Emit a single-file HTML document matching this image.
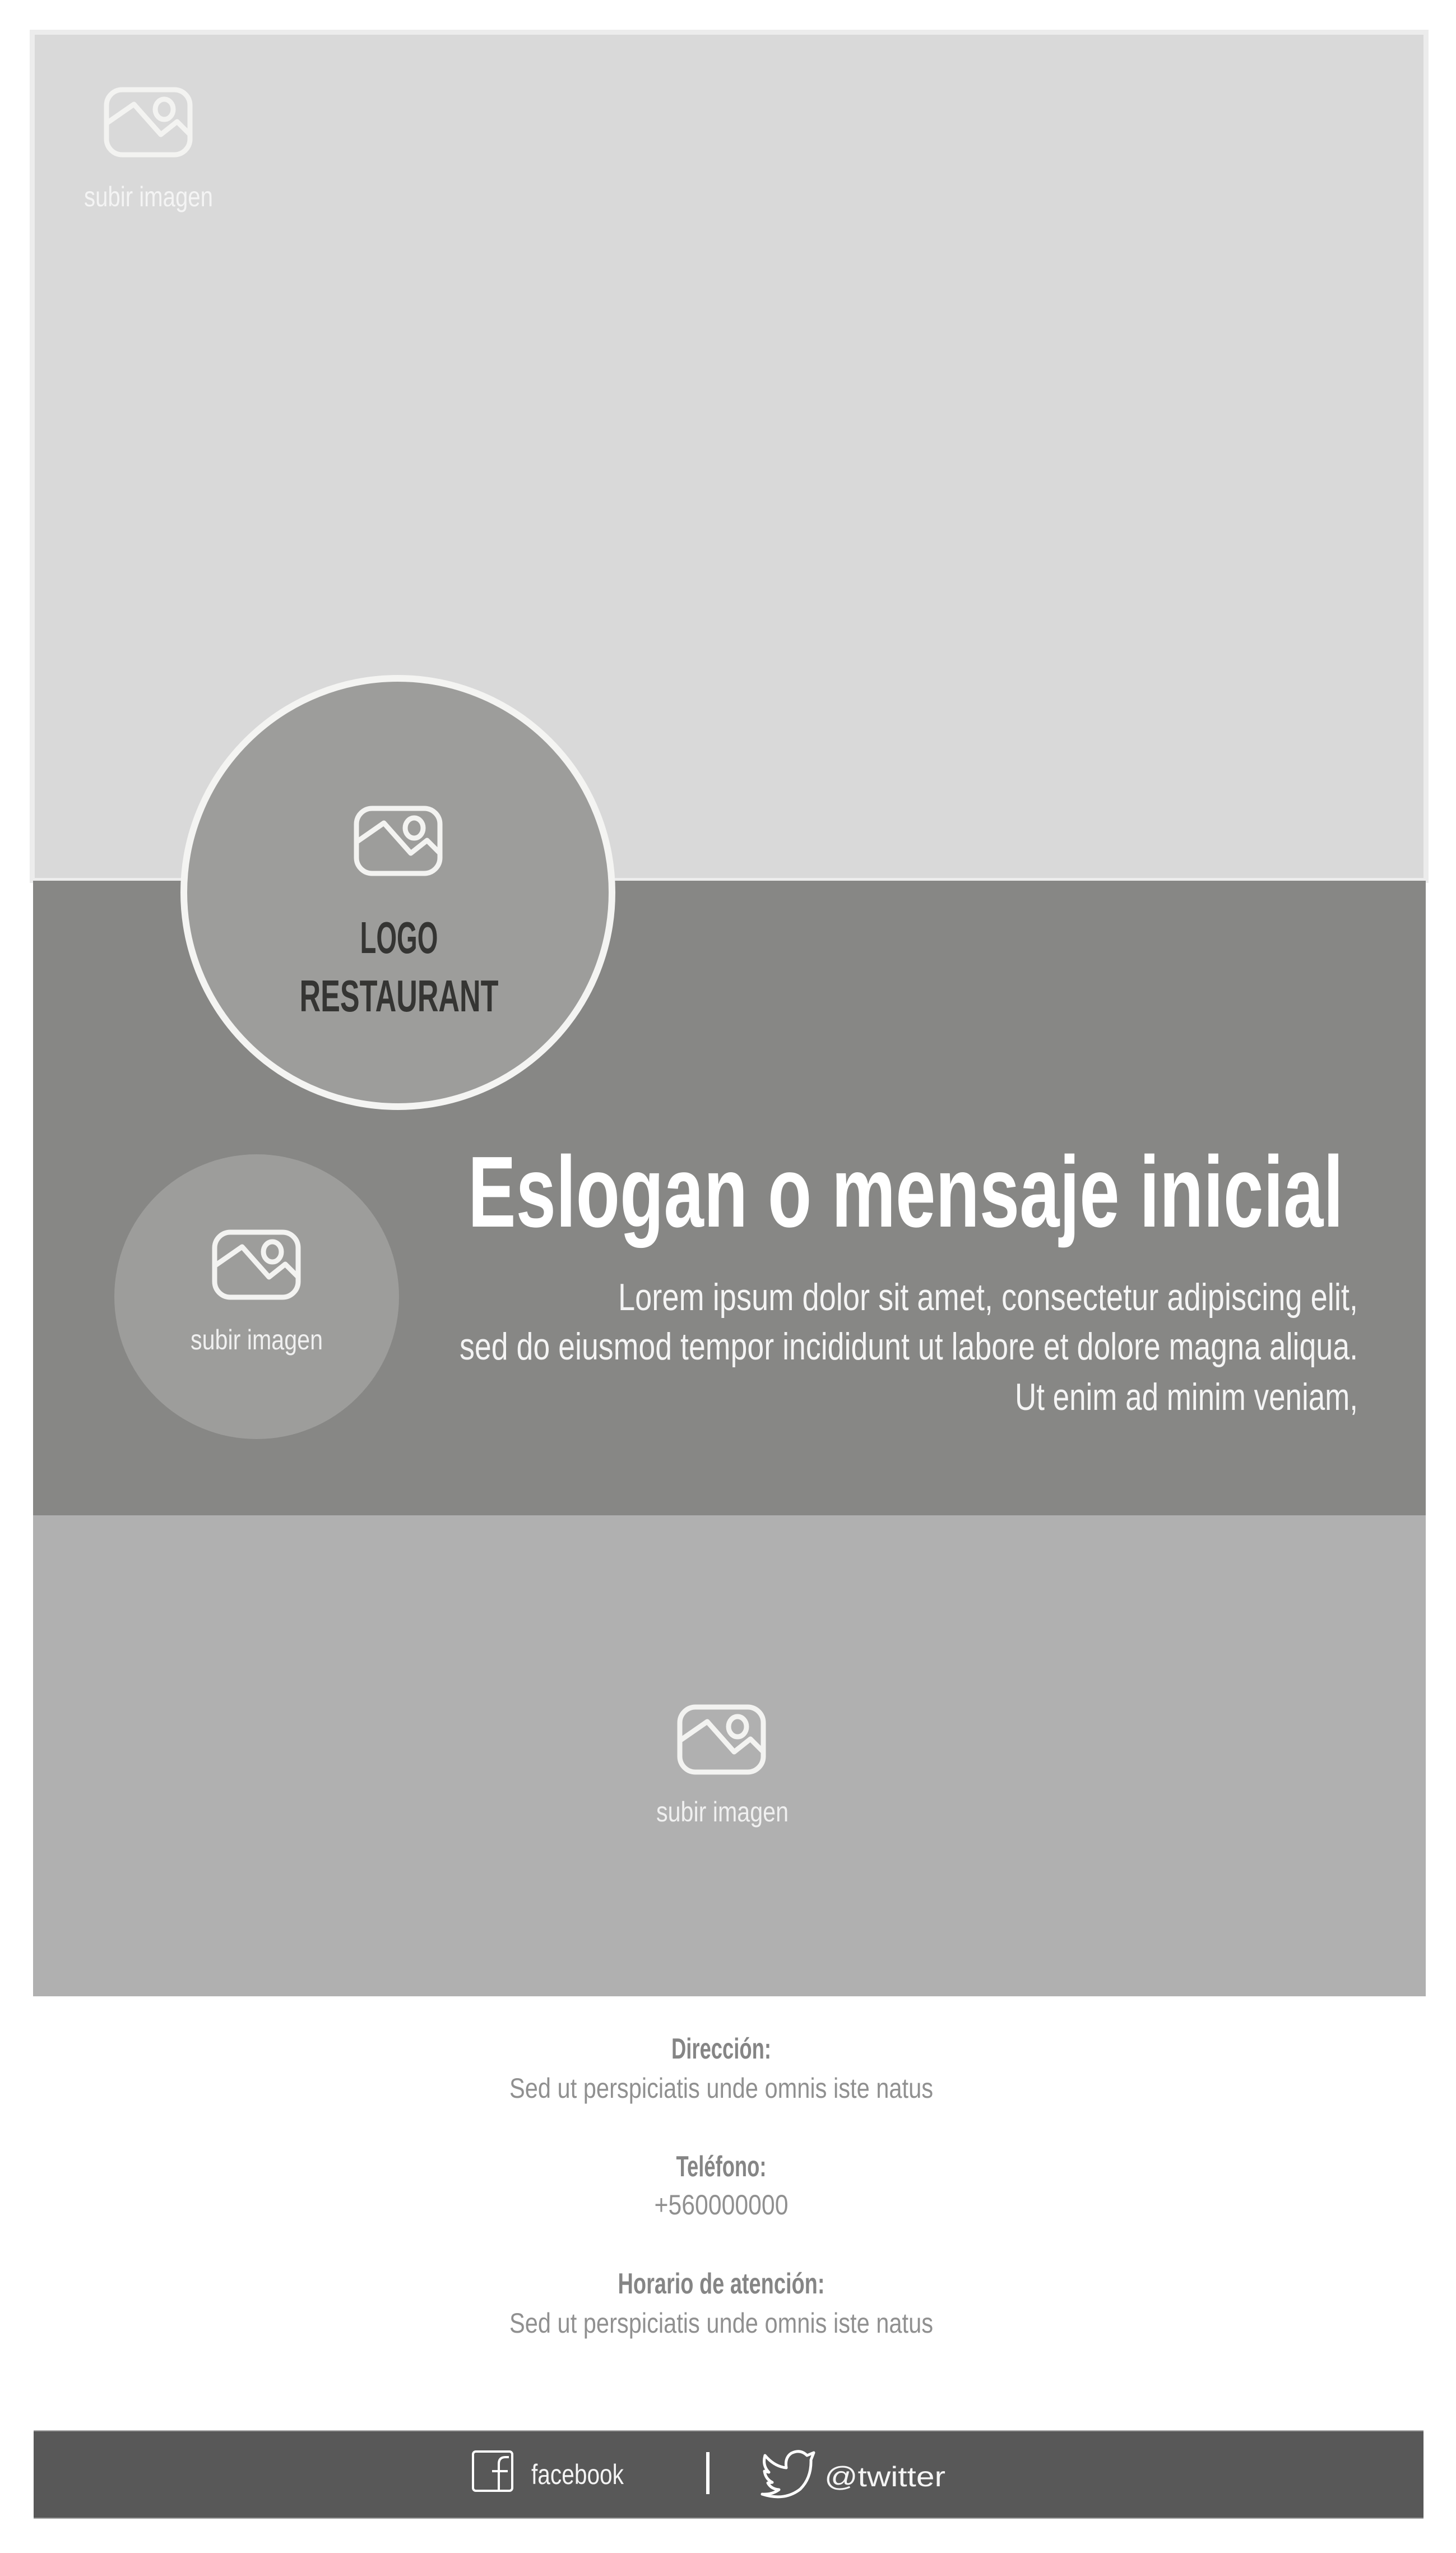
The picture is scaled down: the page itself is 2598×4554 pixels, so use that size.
<!DOCTYPE html>
<html><head><meta charset="utf-8"><style>
html,body{margin:0;padding:0;background:#fff;}
svg{display:block;}
text{font-family:"Liberation Sans",sans-serif;}
</style></head><body>
<svg width="2598" height="4554" viewBox="0 0 2598 4554" xmlns="http://www.w3.org/2000/svg">
<defs>
<g id="ic" fill="none" stroke="#f3f3f1" stroke-width="9" stroke-linejoin="round" stroke-linecap="round">
<rect x="5" y="5" width="149" height="116" rx="28"/>
<polyline points="5,65 54,31 102,85 131,62 154,85"/>
<ellipse cx="108" cy="40" rx="16" ry="18"/>
</g>
</defs>
<rect x="53" y="53" width="2496" height="1522" fill="#ececec"/>
<rect x="62" y="62" width="2478" height="1504" fill="#d9d9d9"/>
<use href="#ic" x="185" y="155"/>
<text x="265" y="368" font-size="50" fill="#f4f4f4" text-anchor="middle" textLength="230" lengthAdjust="spacingAndGlyphs">subir imagen</text>
<rect x="59" y="1571" width="2485" height="1132" fill="#878785"/>
<rect x="59" y="2703" width="2485" height="858" fill="#b0b0b0"/>
<use href="#ic" x="1208" y="3040"/>
<text x="1289" y="3249" font-size="50" fill="#f0f0f0" text-anchor="middle" textLength="236" lengthAdjust="spacingAndGlyphs">subir imagen</text>
<circle cx="710" cy="1592" r="382" fill="#9d9d9b" stroke="#f4f4f2" stroke-width="12"/>
<use href="#ic" x="631" y="1437"/>
<text x="712" y="1700" font-size="80" font-weight="bold" fill="#353533" text-anchor="middle" textLength="139" lengthAdjust="spacingAndGlyphs">LOGO</text>
<text x="712" y="1804" font-size="80" font-weight="bold" fill="#353533" text-anchor="middle" textLength="355" lengthAdjust="spacingAndGlyphs">RESTAURANT</text>
<circle cx="458" cy="2313" r="254" fill="#9d9d9b"/>
<use href="#ic" x="378" y="2193"/>
<text x="458" y="2407" font-size="50" fill="#f0f0f0" text-anchor="middle" textLength="236" lengthAdjust="spacingAndGlyphs">subir imagen</text>
<text x="835" y="2188" font-size="180" font-weight="bold" fill="#ffffff" textLength="1562" lengthAdjust="spacingAndGlyphs">Eslogan o mensaje inicial</text>
<text x="2423" y="2337" font-size="68" fill="#f4f4f4" text-anchor="end" textLength="1320" lengthAdjust="spacingAndGlyphs">Lorem ipsum dolor sit amet, consectetur adipiscing elit,</text>
<text x="2423" y="2425" font-size="68" fill="#f4f4f4" text-anchor="end" textLength="1603" lengthAdjust="spacingAndGlyphs">sed do eiusmod tempor incididunt ut labore et dolore magna aliqua.</text>
<text x="2423" y="2515" font-size="68" fill="#f4f4f4" text-anchor="end" textLength="612" lengthAdjust="spacingAndGlyphs">Ut enim ad minim veniam,</text>
<text x="1287" y="3672" font-size="52" font-weight="bold" fill="#858585" text-anchor="middle" textLength="178" lengthAdjust="spacingAndGlyphs">Dirección:</text>
<text x="1287" y="3742" font-size="50" fill="#909090" text-anchor="middle" textLength="756" lengthAdjust="spacingAndGlyphs">Sed ut perspiciatis unde omnis iste natus</text>
<text x="1287" y="3882" font-size="52" font-weight="bold" fill="#858585" text-anchor="middle" textLength="161" lengthAdjust="spacingAndGlyphs">Teléfono:</text>
<text x="1287" y="3950" font-size="50" fill="#909090" text-anchor="middle" textLength="239" lengthAdjust="spacingAndGlyphs">+560000000</text>
<text x="1287" y="4091" font-size="52" font-weight="bold" fill="#858585" text-anchor="middle" textLength="369" lengthAdjust="spacingAndGlyphs">Horario de atención:</text>
<text x="1287" y="4161" font-size="50" fill="#909090" text-anchor="middle" textLength="756" lengthAdjust="spacingAndGlyphs">Sed ut perspiciatis unde omnis iste natus</text>
<rect x="60" y="4335" width="2480" height="158" fill="#a0a0a0"/>
<rect x="60" y="4337" width="2480" height="154" fill="#585858"/>
<g fill="none" stroke="#ffffff" stroke-width="4">
<rect x="844" y="4373" width="70" height="70" rx="5"/>
<path d="M890 4443 V4395 Q890 4383 902 4383 H908 M878 4408 H906"/>
</g>
<text x="948" y="4431" font-size="50" fill="#f4f4f4" textLength="165" lengthAdjust="spacingAndGlyphs">facebook</text>
<rect x="1260" y="4374" width="6" height="75" fill="#ffffff"/>
<path d="M1447 4388 L1452 4375 L1440 4380 Q1428 4368 1412 4376 Q1400 4384 1403 4402 Q1382 4400 1365 4380 Q1360 4398 1372 4410 L1364 4408 Q1366 4422 1378 4428 L1370 4429 Q1376 4440 1390 4441 Q1378 4450 1360 4449 Q1400 4462 1428 4440 Q1448 4420 1447 4388 Z" fill="none" stroke="#ffffff" stroke-width="5" stroke-linejoin="round"/>
<text x="1471" y="4435" font-size="50" fill="#f4f4f4" textLength="216" lengthAdjust="spacingAndGlyphs">@twitter</text>
</svg>
</body></html>
